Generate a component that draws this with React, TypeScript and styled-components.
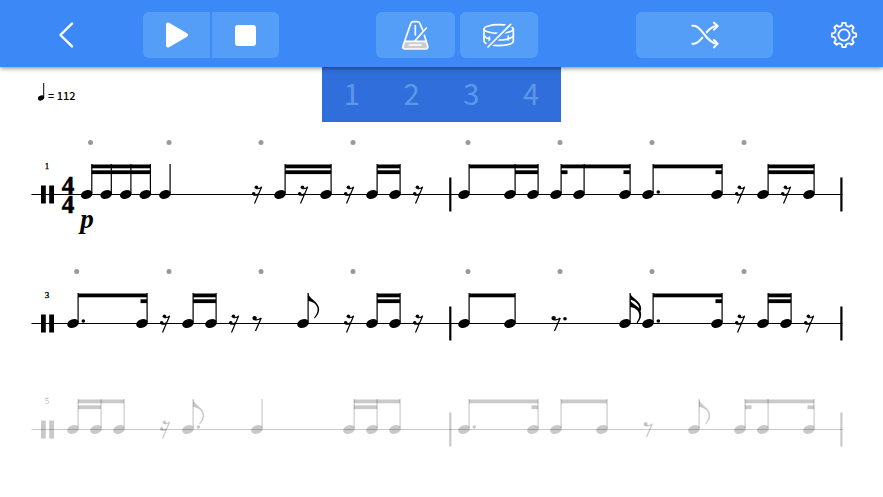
import React from "react";
import styled, { createGlobalStyle } from "styled-components";

const GlobalStyle = createGlobalStyle`
  * { box-sizing: border-box; }
  body {
    margin: 0;
    background: #fff;
    font-family: "Noto Sans CJK SC", "Noto Sans", sans-serif;
  }
`;

const Page = styled.div`
  min-height: 100vh;
  overflow: hidden;
`;

const Toolbar = styled.header`
  position: relative;
  z-index: 1;
  display: grid;
  grid-template-columns:
    [back] 132fr 11fr [transport] 136fr 97fr [sound] 162fr 98fr
    [shuffle] 137fr 32fr [settings] 78fr;
  padding: 12px 0 9px;
  background: #3c88f6;
  box-shadow: 0 1px 5px rgba(0, 0, 0, 0.5);
`;

const ButtonGroup = styled.div<{ $area: string; $gap: number }>`
  grid-column: ${(p) => p.$area};
  display: flex;
  gap: ${(p) => p.$gap}px;
`;

const ToolButton = styled.button<{ $plain?: boolean; $corners?: string }>`
  flex: 1;
  display: flex;
  align-items: center;
  justify-content: center;
  height: 46px;
  padding: 0;
  border: 0;
  border-radius: ${(p) => p.$corners ?? "6px"};
  background: ${(p) => (p.$plain ? "transparent" : "#559ef7")};
  color: #fff;
  cursor: pointer;
`;

const InfoRow = styled.section`
  display: grid;
  grid-template-columns: 322fr 239fr 322fr;
  align-items: start;
  padding-bottom: 12px;
`;

const Tempo = styled.div`
  display: flex;
  align-items: flex-end;
  gap: 3px;
  padding: 16px 0 0 38px;
  color: #000;
  font-size: 11px;
  font-weight: 500;
  line-height: 14px;
`;

const CountIn = styled.ol`
  display: grid;
  grid-template-columns: repeat(4, 1fr);
  margin: 0;
  padding: 0 0 4px;
  list-style: none;
  background: #306fdb;
`;

const Count = styled.li`
  color: #5d98e8;
  font-size: 29px;
  font-weight: 400;
  line-height: 51px;
  text-align: center;
`;

const Staff = styled.svg`
  display: block;
  width: 100%;
  height: auto;
`;

const ScoreText = styled.text<{ $weight?: number }>`
  font-family: "Liberation Serif", serif;
  font-weight: ${(p) => p.$weight ?? 700};
  text-anchor: middle;
`;

/* ---------- toolbar icons ---------- */

const BackIcon = () => (
  <svg width="16" height="28" viewBox="0 0 16 28" fill="none" stroke="currentColor" strokeWidth="2.4" strokeLinecap="round" strokeLinejoin="round">
    <path d="M14 2.6 2.4 14 14 25.4" />
  </svg>
);

const PlayIcon = () => (
  <svg width="22" height="26" viewBox="0 0 22 26" fill="currentColor" stroke="currentColor" strokeWidth="4" strokeLinejoin="round">
    <path d="M2 2.6 20 13 2 23.4Z" />
  </svg>
);

const StopIcon = () => (
  <svg width="21" height="21" viewBox="0 0 21 21" fill="currentColor">
    <rect width="21" height="21" rx="3" />
  </svg>
);

const MetronomeIcon = () => (
  <svg width="28" height="30" viewBox="0 0 84 90" fill="none" stroke="currentColor" strokeWidth="5" strokeLinecap="round" strokeLinejoin="round">
    <path d="M12 64H74L80 82Q80 87 74 87H12Q5 87 5 82Z" fill="#ccc" stroke="none" />
    <path d="M65 30 57 11Q55 5 49 5H37Q31 5 29 11L6 78Q4 87 12 87H74Q82 87 80 78L70 46" />
    <path d="M12 64H74M25 75H60M43 17V45M76 24 43 61" />
  </svg>
);

const DrumIcon = () => (
  <svg width="33" height="27" viewBox="0 0 99 81" fill="none" stroke="currentColor" strokeWidth="5" strokeLinecap="round">
    <ellipse cx="50" cy="21" rx="44" ry="13" />
    <path d="M6 21V58C11 75 89 75 94 58V21" />
    <path d="M7 42Q14 50 24 51M94 42Q84 54 50 54M22 45V57M79 42V54" />
    <path d="M15 76 89 2" stroke="#559ef7" strokeWidth="17" strokeLinecap="butt" />
    <path d="M18 75 86 7" />
  </svg>
);

const ShuffleIcon = () => (
  <svg width="28" height="28" viewBox="0 0 84 84" fill="none" stroke="currentColor" strokeWidth="6" strokeLinecap="round" strokeLinejoin="round">
    <path d="M4 14H9C32 14 48 68 78 68M4 68H9C18 68 26 60 34 50M47 34C55 24 64 15 78 15" />
    <path d="M69 5 80 15 69 26M69 57 80 68 69 79" />
  </svg>
);

const gearOutline = (() => {
  const at = (r: number, deg: number) => {
    const a = ((deg - 90) * Math.PI) / 180;
    return `${(14 + r * Math.cos(a)).toFixed(2)} ${(14 + r * Math.sin(a)).toFixed(2)}`;
  };
  let d = "";
  for (let i = 0; i < 8; i++) {
    const c = i * 45;
    d += `${i ? "L" : "M"}${at(9.9, c - 12)}L${at(12.2, c - 8)}`;
    d += `A12.2 12.2 0 0 1 ${at(12.2, c + 8)}L${at(9.9, c + 12)}`;
    d += `Q${at(8.8, c + 22.5)} ${at(9.9, c + 33)}`;
  }
  return `${d}Z`;
})();

const GearIcon = () => (
  <svg width="28" height="28" viewBox="0 0 28 28" fill="none" stroke="currentColor" strokeWidth="1.8" strokeLinejoin="round">
    <path d={gearOutline} />
    <circle cx="14" cy="14" r="5.6" />
  </svg>
);

const QuarterIcon = () => (
  <svg width="7" height="19" viewBox="0 0 7 19">
    <ellipse cx="3" cy="15" rx="3.2" ry="2.4" transform="rotate(-22 3 15)" />
    <path d="M5.2 0H6.2V15H5.2Z" />
  </svg>
);

/* ---------- notation ---------- */

type Side = "start" | "end";
type NotesItem = {
  kind: "notes";
  heads: number[];
  beams?: 1 | 2;
  second?: [number, number][];
  stubs?: [number, Side][];
  dots?: number[];
  flags?: 1 | 2;
};
type RestItem = { kind: "rest"; x: number; value: 8 | 16; dotted?: boolean };
type Item = NotesItem | RestItem;

const LINE = 60.5;
const TOP = LINE - 30.5;
const STEM = 5;

const rest = (x: number, value: 8 | 16 = 16, dotted = false): Item => ({ kind: "rest", x, value, dotted });
const notes = (heads: number[], more: Partial<NotesItem> = {}): Item => ({ kind: "notes", heads, ...more });
const sixteenths = (...heads: number[]) => notes(heads, { beams: 2 });
const dottedPair = (a: number, b: number) => notes([a, b], { beams: 1, dots: [a], stubs: [[b, "end"]] });

function Rest({ x, value, dotted }: RestItem) {
  return (
    <g transform={`translate(${x} ${LINE})`}>
      {value === 16 ? (
        <>
          <circle cx="-0.6" cy="-7.2" r="1.8" />
          <circle cx="-3.3" cy="-0.8" r="1.8" />
          <path
            d="M-.6-5.9C1.600-5.400 3.200-6 4.700-7.700L-2.500 9M-3.300.5C-1 1 .6.300 1.800-1"
            fill="none"
            stroke="currentColor"
            strokeWidth="1.2"
          />
        </>
      ) : (
        <>
          <circle cx="-2.4" cy="-5.4" r="2.2" />
          <path d="M-2.400-3.900C.4-3.300 2.600-4 4.200-5.600L-1.500 7.500" fill="none" stroke="currentColor" strokeWidth="1.3" />
          {dotted && <circle cx="9" cy="-4.7" r="1.8" />}
        </>
      )}
    </g>
  );
}

function Notes({ heads, beams = 0 as 0 | 1 | 2, second = [], stubs = [], dots = [], flags }: any) {
  const first = heads[0] + STEM;
  const last = heads[heads.length - 1] + STEM;
  return (
    <g>
      {heads.map((x: number) => (
        <g key={x}>
          <ellipse cx={x} cy={LINE} rx="6" ry="4.2" transform={`rotate(-18 ${x} ${LINE})`} />
          <rect x={x + STEM - 0.5} y={TOP} width="1.2" height="29" />
        </g>
      ))}
      {beams > 0 && <rect x={first} y={TOP + 0.5} width={last - first} height="3.8" />}
      {beams > 1 && <rect x={first} y={TOP + 6.3} width={last - first} height="3.8" />}
      {second.map(([a, b]: [number, number]) => (
        <rect key={a} x={a + STEM} y={TOP + 6.3} width={b - a} height="3.8" />
      ))}
      {stubs.map(([x, side]: [number, Side]) => (
        <rect key={x} x={side === "start" ? x + STEM : x + STEM - 6.5} y={TOP + 6.3} width="6.5" height="3.8" />
      ))}
      {dots.map((x: number) => (
        <circle key={x} cx={x + 10.3} cy={LINE - 2.5} r="1.8" />
      ))}
      {flags === 1 && (
        <path
          transform={`translate(${first} ${TOP})`}
          d="M0 0C.8 6 11.200 8.500 11.200 16.500C11.200 20 9 23 6.700 25.600L6 25C8 22 9.800 19.500 9.600 16C9.200 11 4.500 8.200 0 7.900Z"
        />
      )}
      {flags === 2 && (
        <path
          transform={`translate(${first} ${TOP})`}
          d="M0 0C1 5 11.200 8 11.200 15.500Q11.200 17 10.500 18C12 22 10.800 26.500 7.500 30.200L6.500 29.500C9 26 9.800 23 9 20.500C8 17 4.500 14.500 0 14V7C1.500 10.500 6.500 12 9.300 15.500C9 11 4.500 7.500 0 6.500Z"
        />
      )}
    </g>
  );
}

type SystemData = { measure: number; height: number; beats: number[]; opening?: boolean; upcoming?: boolean; items: Item[] };

const systems: SystemData[] = [
  {
    measure: 1,
    height: 129,
    opening: true,
    beats: [90.5, 169, 261, 353, 468, 560, 652, 744],
    items: [
      sixteenths(86.7, 106.2, 125.8, 145.3), notes([165]), rest(257),
      sixteenths(280, 326), rest(303), rest(349), sixteenths(372, 395), rest(418),
      notes([464, 510, 533], { beams: 1, second: [[510, 533]] }),
      notes([556, 579, 625], { beams: 1, stubs: [[556, "start"], [625, "end"]] }),
      dottedPair(648, 717), rest(740), sixteenths(763, 809), rest(786),
    ],
  },
  {
    measure: 3,
    height: 106,
    beats: [76.7, 169, 261, 353, 468, 560, 652, 744],
    items: [
      dottedPair(73, 142), rest(165), sixteenths(188, 211), rest(234), rest(257, 8),
      notes([303], { flags: 1 }), rest(349), sixteenths(372, 395), rest(418),
      notes([464, 510], { beams: 1 }), rest(556, 8, true), notes([625], { flags: 2 }),
      dottedPair(648, 717), rest(740), sixteenths(763, 786), rest(809),
    ],
  },
  {
    measure: 5,
    height: 106,
    upcoming: true,
    beats: [],
    items: [
      notes([73, 96, 119], { beams: 1, second: [[73, 96]] }), rest(165),
      notes([188], { flags: 1, dots: [188] }), notes([257]),
      notes([349, 372, 395], { beams: 1, second: [[349, 372]] }),
      dottedPair(464, 533), notes([556, 602], { beams: 1 }), rest(648, 8),
      notes([694], { flags: 1 }),
      notes([740, 763, 809], { beams: 1, stubs: [[740, "start"], [809, "end"]] }),
    ],
  },
];

function System({ data }: { data: SystemData }) {
  const ink = data.upcoming ? "rgba(0,0,0,0.21)" : "#000";
  return (
    <Staff viewBox={`0 0 883 ${data.height}`} fill={ink} color={ink} role="img" aria-label={`Measure ${data.measure}`}>
      {data.beats.map((x) => (
        <circle key={x} cx={x} cy="8.5" r="2.5" fill="#999" />
      ))}
      <ScoreText x="47" y={LINE - 26} fontSize="9" $weight={400} stroke={ink} strokeWidth="0.3">{data.measure}</ScoreText>
      <rect x="31.5" y={LINE - 0.5} width="811" height="1" />
      <rect x="41" y={LINE - 9} width="4.8" height="18" />
      <rect x="49.2" y={LINE - 9} width="4.8" height="18" />
      {data.opening && (
        <g>
          <ScoreText fontSize="25" stroke="#000" strokeWidth="0.6">
            <tspan x="68" y={LINE - 1}>4</tspan>
            <tspan x="68" y={LINE + 18}>4</tspan>
          </ScoreText>
          <ScoreText x="87" y={LINE + 33} fontSize="27" fontStyle="italic">p</ScoreText>
        </g>
      )}
      {[450.2, 841.3].map((x) => (
        <rect key={x} x={x - 1} y={LINE - 17} width="2.2" height="34" />
      ))}
      {data.items.map((item, i) => (item.kind === "rest" ? <Rest key={i} {...item} /> : <Notes key={i} {...item} />))}
    </Staff>
  );
}

export default function App() {
  return (
    <Page>
      <GlobalStyle />
      <Toolbar>
        <ButtonGroup $area="back" $gap={0}>
          <ToolButton $plain aria-label="Back"><BackIcon /></ToolButton>
        </ButtonGroup>
        <ButtonGroup $area="transport" $gap={2}>
          <ToolButton $corners="6px 0 0 6px" aria-label="Play"><PlayIcon /></ToolButton>
          <ToolButton $corners="0 6px 6px 0" aria-label="Stop"><StopIcon /></ToolButton>
        </ButtonGroup>
        <ButtonGroup $area="sound" $gap={5}>
          <ToolButton aria-label="Metronome"><MetronomeIcon /></ToolButton>
          <ToolButton aria-label="Mute drum"><DrumIcon /></ToolButton>
        </ButtonGroup>
        <ButtonGroup $area="shuffle" $gap={0}>
          <ToolButton aria-label="Shuffle"><ShuffleIcon /></ToolButton>
        </ButtonGroup>
        <ButtonGroup $area="settings" $gap={0}>
          <ToolButton $plain aria-label="Settings"><GearIcon /></ToolButton>
        </ButtonGroup>
      </Toolbar>
      <InfoRow>
        <Tempo><QuarterIcon /><span>= 112</span></Tempo>
        <CountIn>
          {[1, 2, 3, 4].map((n) => <Count key={n}>{n}</Count>)}
        </CountIn>
      </InfoRow>
      <main>
        {systems.map((s) => <System key={s.measure} data={s} />)}
      </main>
    </Page>
  );
}
